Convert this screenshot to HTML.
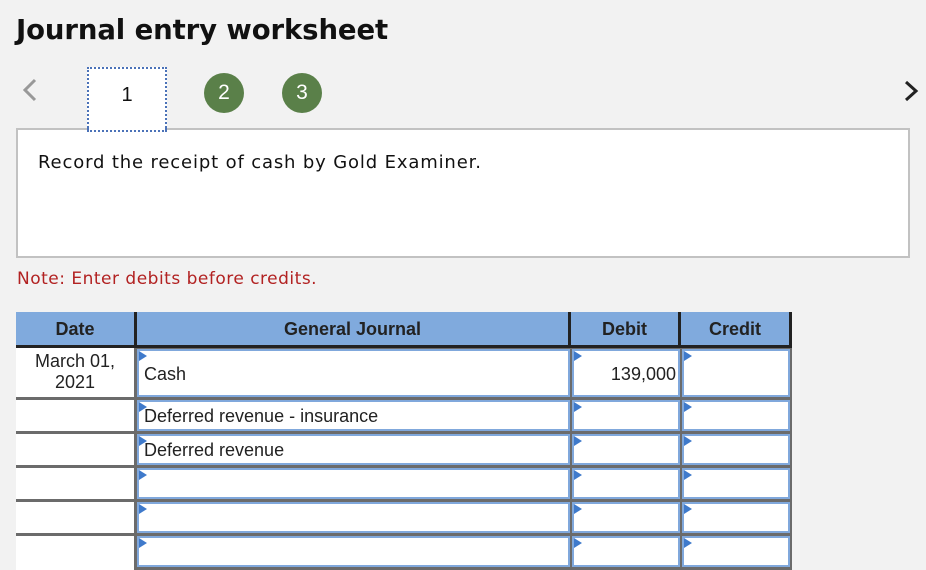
<!DOCTYPE html>
<html><head><meta charset="utf-8"><style>
body{margin:0;width:926px;height:570px;background:#f2f2f2;position:relative;overflow:hidden;font-family:"Liberation Sans",Arial,sans-serif;}
.a{position:absolute;}
h1{position:absolute;left:16px;top:14px;margin:0;font:bold 27.5px "DejaVu Sans",Verdana,sans-serif;color:#111;letter-spacing:-0.1px}
.circ{width:40px;height:40px;border-radius:50%;background:#5a8049;color:#fff;font-size:21px;text-align:center;line-height:40px}
.hd{top:312px;height:36px;background:#80aadd;font-weight:bold;font-size:18px;color:#222;text-align:center;line-height:34px;box-sizing:border-box;border-right:3px solid #222;border-bottom:3px solid #222}
.inp{background:#fff;box-sizing:border-box;border:2px solid #80a8dc;}
.tri{position:absolute;left:0;top:0;width:0;height:0;border-left:8px solid #3f7acb;border-top:5px solid transparent;border-bottom:5px solid transparent}
.t{font-size:18px;color:#222}
</style></head><body>
<h1>Journal entry worksheet</h1>
<svg class="a" style="left:20px;top:78px" width="20" height="24"><path d="M15 2 L5 12 L15 22" fill="none" stroke="#999" stroke-width="3"/></svg>
<svg class="a" style="left:902px;top:80px" width="18" height="22"><path d="M4 2 L14 11 L4 20" fill="none" stroke="#222" stroke-width="3"/></svg>
<div class="a" style="left:87px;top:67px;width:80px;height:64px;background:#fff;box-sizing:border-box;border:2px dotted #4b72b8;font-size:20px;text-align:center;line-height:52px;color:#111">1</div>
<div class="a circ" style="left:204px;top:73px">2</div>
<div class="a circ" style="left:282px;top:73px">3</div>
<div class="a" style="left:16px;top:128px;width:894px;height:130px;background:#fff;box-sizing:border-box;border:2px solid #c2c2c2"></div>
<div class="a" style="left:87px;top:128px;width:80px;height:4px;background:#fff;border-left:2px dotted #4b72b8;border-right:2px dotted #4b72b8;border-bottom:2px dotted #4b72b8;box-sizing:border-box"></div>
<div class="a" style="left:38px;top:152px;font:18px 'DejaVu Sans',Verdana,sans-serif;letter-spacing:0.85px;color:#111">Record the receipt of cash by Gold Examiner.</div>
<div class="a" style="left:17px;top:269px;font:17px 'DejaVu Sans',Verdana,sans-serif;letter-spacing:0.5px;color:#b22222">Note: Enter debits before credits.</div>

<div class="a hd" style="left:16px;width:121px">Date</div>
<div class="a hd" style="left:137px;width:434px">General Journal</div>
<div class="a hd" style="left:571px;width:110px">Debit</div>
<div class="a hd" style="left:681px;width:111px">Credit</div>

<div class="a" style="left:16px;top:348px;width:776px;height:222px;background:#6b6b6b"></div>
<div class="a" style="left:16px;top:348px;width:118px;height:49px;background:#fff;text-align:center;font-size:18px;line-height:21px;padding-top:3px;box-sizing:border-box;color:#222">March 01,<br>2021</div>
<div class="a" style="left:16px;top:400px;width:118px;height:31px;background:#fff"></div>
<div class="a" style="left:16px;top:434px;width:118px;height:31px;background:#fff"></div>
<div class="a" style="left:16px;top:468px;width:118px;height:31px;background:#fff"></div>
<div class="a" style="left:16px;top:502px;width:118px;height:31px;background:#fff"></div>
<div class="a" style="left:16px;top:536px;width:118px;height:34px;background:#fff"></div>

<div class="a inp" style="left:137px;top:349px;width:433px;height:48px"><div class="tri"></div><span class="a t" style="left:5px;top:13px">Cash</span></div>
<div class="a inp" style="left:137px;top:400px;width:433px;height:31px"><div class="tri"></div><span class="a t" style="left:5px;top:4px">Deferred revenue - insurance</span></div>
<div class="a inp" style="left:137px;top:434px;width:433px;height:31px"><div class="tri"></div><span class="a t" style="left:5px;top:4px">Deferred revenue</span></div>
<div class="a inp" style="left:137px;top:468px;width:433px;height:31px"><div class="tri"></div></div>
<div class="a inp" style="left:137px;top:502px;width:433px;height:31px"><div class="tri"></div></div>
<div class="a inp" style="left:137px;top:536px;width:433px;height:31px"><div class="tri"></div></div>

<div class="a inp" style="left:572px;top:349px;width:108px;height:48px"><div class="tri"></div><span class="a t" style="right:2px;top:13px">139,000</span></div>
<div class="a inp" style="left:572px;top:400px;width:108px;height:31px"><div class="tri"></div></div>
<div class="a inp" style="left:572px;top:434px;width:108px;height:31px"><div class="tri"></div></div>
<div class="a inp" style="left:572px;top:468px;width:108px;height:31px"><div class="tri"></div></div>
<div class="a inp" style="left:572px;top:502px;width:108px;height:31px"><div class="tri"></div></div>
<div class="a inp" style="left:572px;top:536px;width:108px;height:31px"><div class="tri"></div></div>

<div class="a inp" style="left:682px;top:349px;width:108px;height:48px"><div class="tri"></div></div>
<div class="a inp" style="left:682px;top:400px;width:108px;height:31px"><div class="tri"></div></div>
<div class="a inp" style="left:682px;top:434px;width:108px;height:31px"><div class="tri"></div></div>
<div class="a inp" style="left:682px;top:468px;width:108px;height:31px"><div class="tri"></div></div>
<div class="a inp" style="left:682px;top:502px;width:108px;height:31px"><div class="tri"></div></div>
<div class="a inp" style="left:682px;top:536px;width:108px;height:31px"><div class="tri"></div></div>
</body></html>
